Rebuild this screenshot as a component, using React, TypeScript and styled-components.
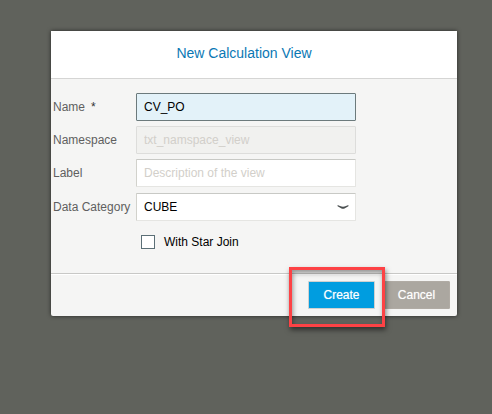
import React from "react";
import styled, { createGlobalStyle } from "styled-components";

const GlobalStyle = createGlobalStyle`
  * { box-sizing: border-box; }
  body {
    margin: 0;
    background: #60625c;
    font-family: "Liberation Sans", Arial, sans-serif;
    font-size: 12px;
    color: #000;
  }
  input, select, button { font: inherit; }
`;

const Page = styled.main`
  min-height: 100vh;
  padding: 31px 35px 31px 51px;
`;

const Dialog = styled.form`
  background: #f5f5f4;
  border-radius: 0 0 2px 2px;
  box-shadow: 0 0 4px rgba(0, 0, 0, 0.6);
`;

const Header = styled.header`
  height: 48px;
  padding: 0 20px 3px 0;
  display: flex;
  align-items: center;
  justify-content: center;
  background: #fff;
  border-bottom: 1px solid #d5d5d4;
`;

const Title = styled.h1`
  margin: 0;
  font-size: 14px;
  line-height: 18px;
  font-weight: 400;
  color: #0a78b4;
`;

const Body = styled.div`
  padding: 14px 2px 24px;
  display: grid;
  gap: 5px;
`;

const Row = styled.div`
  display: grid;
  grid-template-columns: 78px minmax(0, 220px);
  column-gap: 5px;
  align-items: center;
`;

const Label = styled.label`
  color: #5f5f5f;
  white-space: nowrap;
`;

const Required = styled.span`
  margin-left: 6px;
  color: #333;
`;

const Field = styled.input`
  width: 100%;
  height: 28px;
  padding: 0 7px;
  border: 1px solid #e5e5e2;
  border-top-color: #c8c9c5;
  border-left-color: #d2d2cc;
  border-radius: 1px;
  background: #fff;
  color: #000;
  outline: none;

  &::placeholder { color: #d2cfca; opacity: 1; }
  &:disabled { background: #f1f1ef; border-color: #dddddb; }
`;

const NameField = styled(Field)`
  background: #e3f2f9;
  border-color: #6c7a7c;
`;

const SelectBox = styled.div`
  position: relative;
  padding-top: 1px;
`;

const Select = styled(Field).attrs({ as: "select" })`
  display: block;
  appearance: none;
`;

const Arrow = styled.svg`
  position: absolute;
  right: 7px;
  top: 12px;
  pointer-events: none;
`;

const CheckLabel = styled.label`
  grid-column: 2;
  padding: 9px 5px 0;
  display: flex;
  align-items: center;
  gap: 9px;
`;

const Checkbox = styled.input`
  appearance: none;
  width: 14px;
  height: 14px;
  margin: 0;
  background: #fff;
  border: 1px solid #5b6f76;

  &:checked { background: #5b6f76; box-shadow: inset 0 0 0 2px #fff; }
`;

const Footer = styled.footer`
  padding: 7px;
  display: flex;
  justify-content: flex-end;
  gap: 8px;
  border-top: 1px solid #c8c8c6;
  box-shadow: inset 0 1px #fff;
`;

const Button = styled.button<{ $primary?: boolean }>`
  width: 67px;
  height: 28px;
  padding: 0;
  border: 1px solid ${(p) => (p.$primary ? "#cfd1d0" : "#b0aba4")};
  border-radius: 1px;
  background: ${(p) => (p.$primary ? "#009de0" : "#aba7a0")};
  color: #fff;
  text-shadow: 0 0 1px rgba(255, 255, 255, 0.6);
`;

const Highlighted = styled.div`
  position: relative;
  display: flex;

  &::after {
    content: "";
    position: absolute;
    inset: -14px -10px -18px -19px;
    border: 3px solid #fd4245;
    box-shadow: 1px 3px 5px rgba(0, 0, 0, 0.5), inset 1px 3px 5px rgba(0, 0, 0, 0.4);
    pointer-events: none;
  }
`;

export default function App() {
  return (
    <Page>
      <GlobalStyle />
      <Dialog onSubmit={(e) => e.preventDefault()}>
        <Header>
          <Title>New Calculation View</Title>
        </Header>
        <Body>
          <Row>
            <Label htmlFor="name">Name<Required>*</Required></Label>
            <NameField id="name" defaultValue="CV_PO" />
          </Row>
          <Row>
            <Label htmlFor="namespace">Namespace</Label>
            <Field id="namespace" placeholder="txt_namspace_view" disabled />
          </Row>
          <Row>
            <Label htmlFor="label">Label</Label>
            <Field id="label" placeholder="Description of the view" />
          </Row>
          <Row>
            <Label htmlFor="category">Data Category</Label>
            <SelectBox>
              <Select id="category" defaultValue="CUBE">
                <option>CUBE</option>
                <option>DIMENSION</option>
              </Select>
              <Arrow width="12" height="6" viewBox="0 0 12 6" aria-hidden="true">
                <path d="M0.6 1 L3 2.1 Q6 3.5 9 2.100 L11.400 1 L11.400 2.300 L7.500 4.500 Q6 5.200 4.500 4.500 L0.600 2.300 Z" fill="#4a4f50" />
              </Arrow>
            </SelectBox>
          </Row>
          <Row>
            <CheckLabel>
              <Checkbox type="checkbox" />
              With Star Join
            </CheckLabel>
          </Row>
        </Body>
        <Footer>
          <Highlighted>
            <Button type="submit" $primary>Create</Button>
          </Highlighted>
          <Button type="button">Cancel</Button>
        </Footer>
      </Dialog>
    </Page>
  );
}
